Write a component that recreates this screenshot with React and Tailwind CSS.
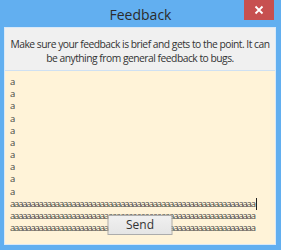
import React from 'react';

const longLine = 'a'.repeat(60);

const FeedbackWindow = () => {
    const shortLines = Array.from({ length: 10 }, () => 'a');

    return (
        <div className="w-[281px] h-[250px] bg-[#62aff0] flex flex-col font-['Open_Sans','Noto_Sans',sans-serif]">
            {/* 타이틀 바 */}
            <div className="relative h-[27px] flex items-center justify-center">
                <span className="text-[14px] text-[#2b2b2b] leading-none mt-[3px]">Feedback</span>
                <button className="absolute top-0 right-[7px] w-[30px] h-[20px] bg-[#c75050] flex items-center justify-center">
                    <svg width="10" height="10" viewBox="0 0 10 10">
                        <path d="M1.5 1.5 L8.5 8.5 M8.5 1.5 L1.5 8.5" stroke="#ffffff" strokeWidth="1.8" />
                    </svg>
                </button>
            </div>

            {/* 본문 */}
            <div className="ml-[4px] mr-[5px] mb-[5px] flex-1 flex flex-col border border-[#d9e9f8]">
                <div className="h-[42px] bg-[#f0f0f0] flex items-center justify-center pt-[3px]">
                    <p className="text-[10.3px] leading-[14px] tracking-[-0.5px] text-[#333333] text-center whitespace-nowrap">
                        Make sure your feedback is brief and gets to the point. It can<br />
                        be anything from general feedback to bugs.
                    </p>
                </div>
                <div className="h-px bg-[#cfe0f2]" />
                <div className="relative flex-1 bg-[#fff3d8] pl-[5px] pt-[5px] overflow-hidden">
                    <div className="text-[9.5px] leading-[12.17px] tracking-[-1.2px] text-[#444444]">
                        {shortLines.map((line, index) => (
                            <div key={index}>{line}</div>
                        ))}
                        <div className="flex items-center">
                            <span>{longLine}</span>
                            <span className="inline-block w-px h-[12px] bg-[#222222] ml-[1px]" />
                        </div>
                        <div>{longLine}</div>
                        <div>{longLine}</div>
                    </div>

                    {/* 전송 버튼 */}
                    <button className="absolute left-1/2 -translate-x-1/2 bottom-[9px] w-[65px] h-[20px] border border-[#acacac] bg-gradient-to-b from-[#f0f0f0] to-[#e5e5e5] text-[12px] text-[#333333] leading-none flex items-center justify-center">
                        Send
                    </button>
                </div>
            </div>
        </div>
    );
};

export default function App() {
    return <FeedbackWindow />;
}
